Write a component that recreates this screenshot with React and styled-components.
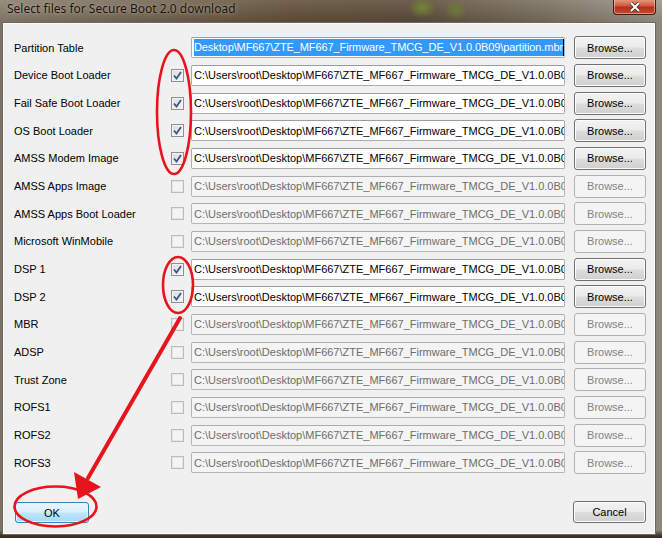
import React from 'react';
import styled, { createGlobalStyle } from 'styled-components';

const GlobalStyle = createGlobalStyle`
  html, body {
    margin: 0;
    padding: 0;
    background: #6b5c4a;
  }
  * {
    box-sizing: border-box;
  }
`;

const Window = styled.div`
  position: relative;
  width: 662px;
  height: 538px;
  display: flex;
  flex-direction: column;
  overflow: hidden;
  background:
    radial-gradient(ellipse 14px 10px at 422px 8px, rgba(120, 140, 50, 0.85), rgba(120, 140, 50, 0) 100%),
    radial-gradient(ellipse 12px 10px at 456px 10px, rgba(110, 130, 45, 0.8), rgba(110, 130, 45, 0) 100%),
    linear-gradient(180deg, rgba(255, 255, 255, 0.1) 0px, rgba(0, 0, 0, 0.1) 22px, rgba(0, 0, 0, 0.1) 530px, #3a2f24 536px),
    linear-gradient(90deg, #8a8070 0%, #786955 20%, #62503b 45%, #5d4d3a 62%, #7b705f 82%, #9d978b 100%);
  font-family: 'Liberation Sans', Arial, sans-serif;
  font-size: 11px;
  color: #000;
`;

const TitleBar = styled.div`
  height: 22px;
  display: flex;
  align-items: flex-start;
  justify-content: space-between;
  padding-left: 7px;
  padding-right: 6px;
`;

const Title = styled.div`
  font-family: 'Noto Sans', 'Open Sans', sans-serif;
  font-size: 12px;
  line-height: 18px;
  color: #1a1208;
  text-shadow: 0 0 6px rgba(255, 255, 255, 0.4), 0 0 2px rgba(255, 255, 255, 0.3);
`;

const CloseButton = styled.div`
  width: 43px;
  height: 16px;
  margin-top: -1px;
  border: 1px solid #3c1d16;
  border-top: none;
  border-radius: 0 0 4px 4px;
  background: linear-gradient(180deg, #e8a08a 0%, #d2593d 45%, #b5301a 55%, #c44a2e 100%);
  box-shadow: inset 0 0 0 1px rgba(255, 220, 200, 0.5);
  display: flex;
  align-items: center;
  justify-content: center;
`;

const Client = styled.div`
  flex: 1;
  margin: 0 6px 3px 2px;
  background: #f0f0f0;
  border: 1px solid #6e675c;
  box-shadow: inset 0 0 0 1px #fbfbfb;
  display: flex;
  flex-direction: column;
  padding: 11px 9px 11px 11px;
`;

const Form = styled.div`
  display: grid;
  grid-template-columns: 157px 20px 383px 72px;
  grid-auto-rows: 27.67px;
  align-items: center;
`;

const Label = styled.div`
  white-space: nowrap;
`;

const CheckBox = styled.div`
  width: 13px;
  height: 13px;
  border: 1px solid ${(p) => (p.$disabled ? '#bcbcbc' : '#8f8f8f')};
  background: ${(p) =>
    p.$disabled
      ? 'linear-gradient(135deg, #f4f4f4, #f4f4f4)'
      : 'linear-gradient(135deg, #dcdcdc 0%, #f6f6f6 100%)'};
  box-shadow: inset 0 0 0 1px ${(p) => (p.$disabled ? '#e6e6e6' : '#f4f4f4')};
  display: flex;
  align-items: center;
  justify-content: center;
`;

const Field = styled.div`
  width: 374px;
  height: 21px;
  border: 1px solid ${(p) => (p.$disabled ? '#b5b5b5' : '#abadb3')};
  border-top-color: ${(p) => (p.$disabled ? '#adadad' : '#9a9da5')};
  border-radius: 2px;
  background: ${(p) => (p.$disabled ? '#f4f4f4' : '#ffffff')};
  color: ${(p) => (p.$disabled ? '#6d6d6d' : '#000')};
  padding: 0 2px;
  display: flex;
  align-items: center;
  overflow: hidden;
  white-space: nowrap;
`;

const Selected = styled.span`
  background: #3399ff;
  color: #fff;
  padding: 2px 0 2px;
  line-height: 13px;
  letter-spacing: -0.1px;
  border-right: 1px solid #000;
`;

const Button = styled.div`
  width: ${(p) => p.$width || 72}px;
  height: ${(p) => p.$height || 23}px;
  border: 1px solid ${(p) => (p.$disabled ? '#adb2b5' : '#707070')};
  border-radius: 3px;
  background: ${(p) =>
    p.$disabled
      ? '#f4f4f4'
      : 'linear-gradient(180deg, #f2f2f2 0%, #ebebeb 48%, #dddddd 52%, #cfcfcf 100%)'};
  box-shadow: inset 0 0 0 1px ${(p) => (p.$disabled ? '#f4f4f4' : '#fcfcfc')};
  color: ${(p) => (p.$disabled ? '#838383' : '#000')};
  display: flex;
  align-items: center;
  justify-content: center;
`;

const DefaultButton = styled(Button)`
  border-color: #3c7fb1;
  background: linear-gradient(180deg, #eaf6fd 0%, #d9f0fc 48%, #bee6fd 52%, #a7d9f5 100%);
  box-shadow: inset 0 0 0 1px #e2f3fc;
`;

const Footer = styled.div`
  margin-top: auto;
  display: flex;
  justify-content: space-between;
  align-items: flex-end;
  padding-left: 1px;
`;

const Overlay = styled.svg`
  position: absolute;
  left: 0;
  top: 0;
  pointer-events: none;
`;

// the field only shows the start of the path, the rest is scrolled out of view
const PATH = 'C:\\Users\\root\\Desktop\\MF667\\ZTE_MF667_Firmware_TMCG_DE_V1.0.0B0';

const rows = [
  { label: 'Partition Table', nocheck: true, selected: true },
  { label: 'Device Boot Loader', checked: true },
  { label: 'Fail Safe Boot Loader', checked: true },
  { label: 'OS Boot Loader', checked: true },
  { label: 'AMSS Modem Image', checked: true },
  { label: 'AMSS Apps Image' },
  { label: 'AMSS Apps Boot Loader' },
  { label: 'Microsoft WinMobile' },
  { label: 'DSP 1', checked: true },
  { label: 'DSP 2', checked: true },
  { label: 'MBR' },
  { label: 'ADSP' },
  { label: 'Trust Zone' },
  { label: 'ROFS1' },
  { label: 'ROFS2' },
  { label: 'ROFS3' },
];

function Check() {
  return (
    <svg width="9" height="9" viewBox="0 0 9 9">
      <path d="M1 4.5 L3.5 7.5 L8 1" fill="none" stroke="#3c548c" strokeWidth="1.8" />
    </svg>
  );
}

function Row({ row }) {
  const disabled = !row.nocheck && !row.checked;
  return (
    <>
      <Label>{row.label}</Label>
      <div>{!row.nocheck && <CheckBox $disabled={disabled}>{row.checked && <Check />}</CheckBox>}</div>
      <Field $disabled={disabled}>
        {row.selected ? (
          <Selected>Desktop\MF667\ZTE_MF667_Firmware_TMCG_DE_V1.0.0B09\partition.mbr</Selected>
        ) : (
          PATH
        )}
      </Field>
      <Button $disabled={disabled}>Browse...</Button>
    </>
  );
}

export default function App() {
  return (
    <>
      <GlobalStyle />
      <Window>
        <TitleBar>
          <Title>Select files for Secure Boot 2.0 download</Title>
          <CloseButton>
            <svg width="12" height="10" viewBox="0 0 12 10">
              <path d="M2 1 L10 9 M10 1 L2 9" stroke="#3a2a26" strokeWidth="3.4" />
              <path d="M2 1 L10 9 M10 1 L2 9" stroke="#ffffff" strokeWidth="2" />
            </svg>
          </CloseButton>
        </TitleBar>
        <Client>
          <Form>
            {rows.map((row) => (
              <Row key={row.label} row={row} />
            ))}
          </Form>
          <Footer>
            <DefaultButton $width={74} $height={21}>OK</DefaultButton>
            <Button $width={73} $height={22}>Cancel</Button>
          </Footer>
        </Client>
        <Overlay width="662" height="538" viewBox="0 0 662 538">
          <g fill="none" stroke="#e8141c" strokeWidth="2.6">
            <ellipse cx="174" cy="112" rx="17" ry="62" />
            <ellipse cx="178" cy="285" rx="15" ry="28" />
            <ellipse cx="55.5" cy="506.5" rx="41" ry="20" />
          </g>
          <path d="M180 318 L88 478" stroke="#e8141c" strokeWidth="4" strokeLinecap="round" />
          <polygon points="74,472 101,487 78,499" fill="#e8141c" />
        </Overlay>
      </Window>
    </>
  );
}
